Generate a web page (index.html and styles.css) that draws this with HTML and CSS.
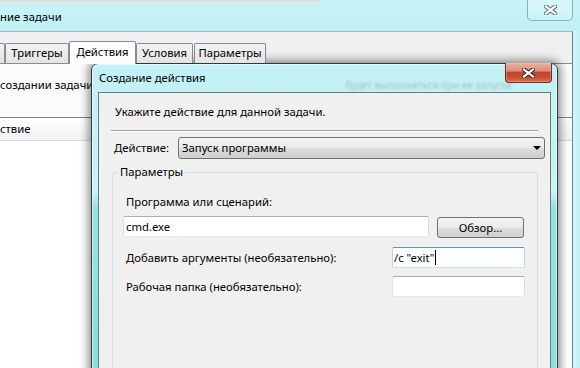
FILE: index.html
```html
<!DOCTYPE html>
<html lang="ru">
<head>
<meta charset="utf-8">
<title>Создание действия</title>
<link rel="stylesheet" href="styles.css">
</head>
<body>
<div class="back">
  <div class="back-title">
    <div class="back-title-main">
      <div class="back-menu"></div>
      <div class="back-title-text">ние задачи</div>
    </div>
    <div class="cap-btn back-close">
      <svg width="13" height="10" viewBox="0 0 13 10"><path d="M2 1.5 L11 8.5 M11 1.5 L2 8.5" stroke="#6b7b80" stroke-width="4.4" stroke-linecap="square"/><path d="M2 1.5 L11 8.5 M11 1.5 L2 8.5" stroke="#fff" stroke-width="2.2" stroke-linecap="square"/></svg>
    </div>
  </div>
  <div class="back-body">
    <div class="back-main">
      <div class="tabs">
        <div class="tab tab-cut"></div>
        <div class="tab tab-trig">Триггеры</div>
        <div class="tab tab-act active">Действия</div>
        <div class="tab tab-usl">Условия</div>
        <div class="tab tab-par">Параметры</div>
      </div>
      <div class="panel">
        <div class="note">создании задачи</div>
        <div class="list">
          <div class="list-head">ствие</div>
          <div class="list-body"></div>
        </div>
      </div>
    </div>
    <div class="back-frame"></div>
  </div>
</div>

<div class="dialog">
  <div class="dlg-title">
    <span class="dlg-title-text">Создание действия</span>
    <span class="ghost">будет выполняться при ее запуске</span>
  </div>
  <div class="cap-btn dlg-close">
    <svg width="13" height="10" viewBox="0 0 13 10"><path d="M2 1.5 L11 8.5 M11 1.5 L2 8.5" stroke="#4a2a24" stroke-width="4.4" stroke-linecap="square"/><path d="M2 1.5 L11 8.5 M11 1.5 L2 8.5" stroke="#fff" stroke-width="2.2" stroke-linecap="square"/></svg>
  </div>
  <div class="client">
    <div class="intro">Укажите действие для данной задачи.</div>
    <div class="sep"></div>
    <div class="combo-row">
      <div class="combo-label">Действие:</div>
      <div class="combo">
        <span>Запуск программы</span>
        <span class="arrow"></span>
      </div>
    </div>
    <fieldset class="params">
      <legend>Параметры</legend>
      <div class="params-body">
        <div class="lbl">Программа или сценарий:</div>
        <div class="row1">
          <div class="inp inp-prog">cmd.exe</div>
          <div class="browse">Обзор...</div>
        </div>
        <div class="row row2">
          <div class="lbl">Добавить аргументы (необязательно):</div>
          <div class="inp inp-small focus">/c "exit"<span class="caret"></span></div>
        </div>
        <div class="row row3">
          <div class="lbl">Рабочая папка (необязательно):</div>
          <div class="inp inp-small"></div>
        </div>
      </div>
    </fieldset>
  </div>
</div>
</body>
</html>
```

FILE: styles.css
```css
* { box-sizing: border-box; margin: 0; padding: 0; }

html, body {
  width: 580px;
  height: 368px;
  overflow: hidden;
}

body {
  position: relative;
  font-family: "Noto Sans", "Liberation Sans", sans-serif;
  font-size: 11.3px;
  line-height: 16px;
  color: #000;
  background: #bfeff3;
}

/* ---------- back window ---------- */
.back {
  display: flex;
  flex-direction: column;
  height: 368px;
}

.back-title {
  height: 31px;
  display: flex;
  background: linear-gradient(180deg, #c8f4f8 0%, #bff0f4 100%);
}

.back-title-main {
  flex: 1;
  display: flex;
  flex-direction: column;
}

.back-menu {
  height: 3px;
  width: 320px;
  background: linear-gradient(180deg, #d6dcdd, #e6ecec);
}

.back-title-text {
  padding-top: 6px;
  white-space: nowrap;
}

.cap-btn {
  display: flex;
  align-items: center;
  justify-content: center;
}

.back-close {
  width: 46px;
  height: 22px;
  margin-top: -1px;
  margin-right: 7px;
  border: 1px solid rgba(60, 90, 100, 0.45);
  border-top: none;
  border-radius: 0 0 5px 5px;
  background: linear-gradient(180deg, rgba(255,255,255,0.35), rgba(255,255,255,0.12));
}

.back-body {
  flex: 1;
  display: flex;
}

.back-main {
  width: 573px;
  background: #f0f0f0;
  border-top: 1px solid #9fb6ba;
  border-right: 1px solid #62848a;
  display: flex;
  flex-direction: column;
}

.back-frame {
  flex: 1;
  background: linear-gradient(90deg, #d3f7fa, #bff0f4);
}

.tabs {
  display: flex;
  align-items: flex-end;
  height: 22px;
  margin-top: 9px;
  position: relative;
  z-index: 1;
}

.tab {
  height: 20px;
  border: 1px solid #898c95;
  border-bottom: none;
  border-radius: 2px 2px 0 0;
  background: linear-gradient(180deg, #f3f3f3 0%, #ebebeb 50%, #e3e3e3 100%);
  text-align: center;
  line-height: 18px;
  white-space: nowrap;
}

.tab-cut { width: 5px; border-left: none; border-radius: 0 2px 0 0; }
.tab-trig { width: 64px; }
.tab-act { width: 67px; }
.tab-usl { width: 57px; }
.tab-par { width: 72px; margin-left: 1px; }

.tab.active {
  height: 23px;
  margin-bottom: -1px;
  background: #fcfcfc;
  line-height: 19px;
}

.panel {
  flex: 1;
  border-top: 1px solid #898c95;
  background: #fbfbfb;
  display: flex;
  flex-direction: column;
}

.note {
  margin-top: 13px;
  white-space: nowrap;
}

.list {
  margin-top: 24px;
  flex: 1;
  border-top: 1px solid #7f838b;
  background: #fff;
  display: flex;
  flex-direction: column;
}

.list-head {
  height: 23px;
  line-height: 22px;
  background: linear-gradient(180deg, #ffffff, #f1f2f4);
  border-bottom: 1px solid #dadada;
}

.list-body {
  flex: 1;
}

/* ---------- dialog ---------- */
.dialog {
  position: absolute;
  left: 91px;
  top: 63px;
  width: 467px;
  height: 320px;
  border: 1px solid #2c3a3c;
  border-radius: 7px 7px 0 0;
  background: linear-gradient(180deg, #c3f0f4 0%, #c9f3f6 40%, #98e1e2 45%, #8ddcdc 100%);
  box-shadow: 0 0 9px 3px rgba(0, 0, 0, 0.42), inset 0 0 0 1px rgba(255, 255, 255, 0.55);
  display: flex;
  flex-direction: column;
}

.dlg-title {
  height: 28px;
  display: flex;
  align-items: center;
  padding-left: 7px;
  overflow: hidden;
}

.dlg-title-text {
  flex-shrink: 0;
  white-space: nowrap;
}

.ghost {
  flex-shrink: 0;
  margin-left: 140px;
  margin-top: 13px;
  color: rgba(0, 0, 0, 0.2);
  filter: blur(1.3px);
  white-space: nowrap;
  font-size: 10px;
}

.dlg-close {
  position: absolute;
  top: -1px;
  right: 5px;
  width: 47px;
  height: 20px;
  border: 1px solid #6e2d22;
  border-top: none;
  border-radius: 0 0 4px 4px;
  background: linear-gradient(180deg, #ebb3a5 0%, #dc8b78 42%, #c24630 50%, #c44a32 72%, #d9704e 100%);
  box-shadow: inset 0 0 0 1px rgba(255, 200, 180, 0.35);
}

.client {
  flex: 1;
  margin: 0 6px;
  border: 1px solid #5f7f84;
  background: #f0f0f0;
  display: flex;
  flex-direction: column;
  overflow: hidden;
}

.intro {
  margin: 11px 0 0 16px;
}

.sep {
  margin: 10px 0 0 12px;
  width: 427px;
  height: 2px;
  border-top: 1px solid #a0a0a0;
  border-bottom: 1px solid #ffffff;
}

.combo-row {
  display: flex;
  align-items: center;
  height: 22px;
  margin-top: 5px;
}

.combo-label {
  width: 79px;
  padding-left: 15px;
}

.combo {
  width: 367px;
  height: 22px;
  border: 1px solid #707070;
  border-radius: 3px;
  background: linear-gradient(180deg, #f2f2f2 0%, #ebebeb 50%, #dddddd 51%, #cfcfcf 100%);
  display: flex;
  align-items: center;
  padding-left: 3px;
}

.arrow {
  margin-left: auto;
  margin-right: 3px;
  width: 0;
  height: 0;
  border-left: 4px solid transparent;
  border-right: 4px solid transparent;
  border-top: 4px solid #000;
}

.params {
  margin: 5px 0 0 13px;
  width: 426px;
  flex: 1;
  border: 1px solid #d5dfe5;
  border-radius: 3px;
  padding: 0;
  min-width: 0;
}

.params legend {
  margin-left: 5px;
  padding: 0 2px;
  line-height: 16px;
}

.params-body {
  padding: 14px 0 0 10px;
}

.lbl {
  margin-left: 3px;
}

.row1 {
  display: flex;
  margin-top: 6px;
}

.inp {
  height: 21px;
  border: 1px solid;
  border-color: #abadb3 #dbdfe6 #e3e9ef #e2e3ea;
  border-radius: 2px;
  background: #fff;
  line-height: 19px;
  padding-left: 2px;
  white-space: nowrap;
}

.inp-prog {
  width: 306px;
}

.browse {
  width: 87px;
  height: 21px;
  margin: 1px 0 0 8px;
  border: 1px solid #707070;
  border-radius: 3px;
  background: linear-gradient(180deg, #f2f2f2 0%, #ebebeb 50%, #dddddd 51%, #cfcfcf 100%);
  text-align: center;
  line-height: 19px;
}

.row {
  display: grid;
  grid-template-columns: 269px 133px;
  align-items: center;
  height: 21px;
}

.row2 { margin-top: 9px; }
.row3 { margin-top: 8px; }

.inp-small {
  padding-left: 1px;
}

.inp.focus {
  border-color: #5794bf #b7d5ea #c7e2f1 #b7d5ea;
}

.caret {
  display: inline-block;
  width: 1px;
  height: 15px;
  margin-left: 1px;
  vertical-align: -3px;
  background: #000;
}
```
